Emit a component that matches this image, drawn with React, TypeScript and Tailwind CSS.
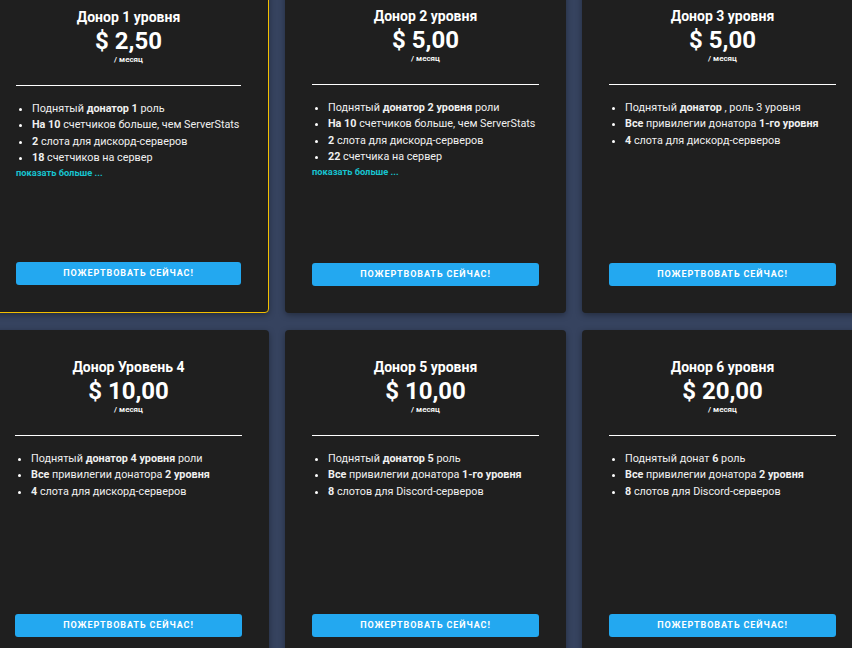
import type { ReactNode } from "react";

type Tier = {
  title: string;
  price: string;
  perks: ReactNode[];
  more?: boolean;
  active?: boolean;
};

const TIERS: Tier[] = [
  {
    title: "Донор 1 уровня",
    price: "$ 2,50",
    active: true,
    more: true,
    perks: [
      <>Поднятый <b>донатор 1</b> роль</>,
      <><b>На 10</b> счетчиков больше, чем ServerStats</>,
      <><b>2</b> слота для дискорд-серверов</>,
      <><b>18</b> счетчиков на сервер</>,
    ],
  },
  {
    title: "Донор 2 уровня",
    price: "$ 5,00",
    more: true,
    perks: [
      <>Поднятый <b>донатор 2 уровня</b> роли</>,
      <><b>На 10</b> счетчиков больше, чем ServerStats</>,
      <><b>2</b> слота для дискорд-серверов</>,
      <><b>22</b> счетчика на сервер</>,
    ],
  },
  {
    title: "Донор 3 уровня",
    price: "$ 5,00",
    perks: [
      <>Поднятый <b>донатор</b> , роль 3 уровня</>,
      <><b>Все</b> привилегии донатора <b>1-го уровня</b></>,
      <><b>4</b> слота для дискорд-серверов</>,
    ],
  },
  {
    title: "Донор Уровень 4",
    price: "$ 10,00",
    perks: [
      <>Поднятый <b>донатор 4 уровня</b> роли</>,
      <><b>Все</b> привилегии донатора <b>2 уровня</b></>,
      <><b>4</b> слота для дискорд-серверов</>,
    ],
  },
  {
    title: "Донор 5 уровня",
    price: "$ 10,00",
    perks: [
      <>Поднятый <b>донатор 5</b> роль</>,
      <><b>Все</b> привилегии донатора <b>1-го уровня</b></>,
      <><b>8</b> слотов для Discord-серверов</>,
    ],
  },
  {
    title: "Донор 6 уровня",
    price: "$ 20,00",
    perks: [
      <>Поднятый донат <b>6</b> роль</>,
      <><b>Все</b> привилегии донатора <b>2 уровня</b></>,
      <><b>8</b> слотов для Discord-серверов</>,
    ],
  },
];

function TierCard({ tier }: { tier: Tier }) {
  return (
    <div
      className={`flex h-[334px] flex-col rounded-[4px] bg-[#1f1f1f] px-[27px] pb-[27px] pt-[27px] shadow-[0_2px_6px_rgba(0,0,0,0.35)] ${
        tier.active ? "border border-[#f2be00]" : ""
      }`}
    >
      <div className="text-center text-[14px] font-bold leading-5 text-white">{tier.title}</div>
      <div className="text-center text-[24px] font-bold leading-[28px] text-white">{tier.price}</div>
      <div className="text-center text-[8px] font-semibold leading-[10px] text-white">/ месяц</div>
      <div className="mt-[20px] h-px w-full bg-white" />
      <ul className="mt-[15px] list-disc pl-4 text-[10.8px] leading-[16.3px] text-[#f0f0f0] marker:text-white">
        {tier.perks.map((perk, i) => (
          <li key={i} className="whitespace-nowrap">
            {perk}
          </li>
        ))}
      </ul>
      {tier.more && (
        <div className="text-[9.3px] font-bold leading-[14px] text-[#17c3cf]">показать больше ...</div>
      )}
      <button
        type="button"
        className="mt-auto h-[23px] w-full rounded-[3px] bg-[#23a8f0] text-[9px] font-bold uppercase tracking-[0.1em] text-white"
      >
        Пожертвовать сейчас!
      </button>
    </div>
  );
}

export default function App() {
  return (
    <div className="h-[648px] w-full overflow-hidden bg-[#36435f] font-['Roboto','Liberation_Sans',sans-serif]">
      <div className="-ml-[12px] -mt-[21px] grid grid-cols-[281px_281px_281px] gap-x-4 gap-y-[17px]">
        {TIERS.map((tier) => (
          <TierCard key={tier.title} tier={tier} />
        ))}
      </div>
    </div>
  );
}
